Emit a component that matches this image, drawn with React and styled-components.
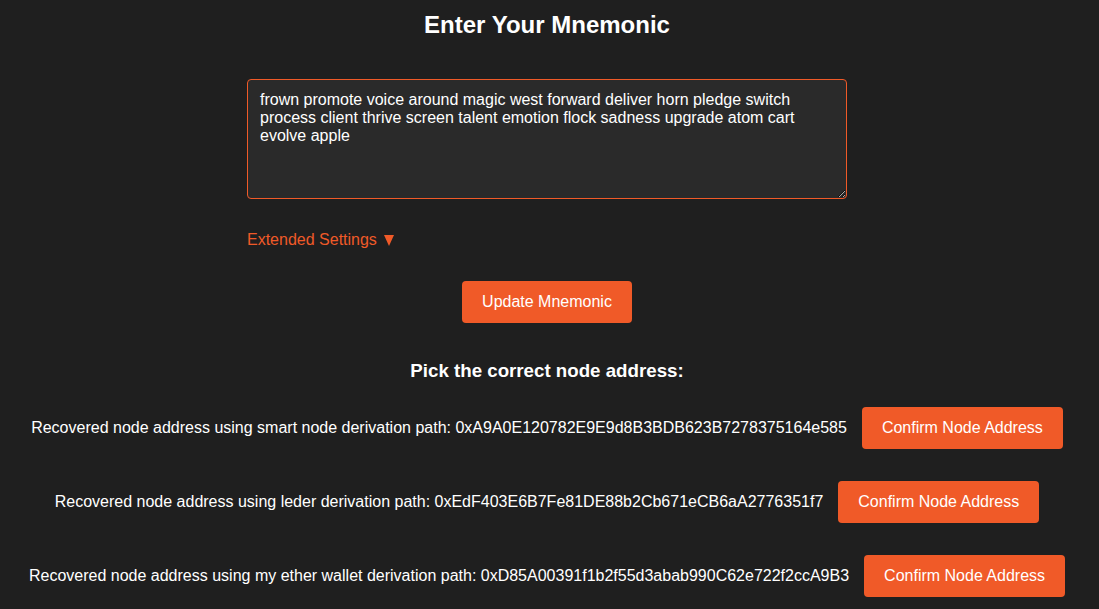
import React from 'react';
import styled, { createGlobalStyle } from 'styled-components';

const GlobalStyle = createGlobalStyle`
    html, body {
        margin: 0;
        padding: 0;
        background: #1f1f1f;
    }
    body {
        font-family: "Liberation Sans", Arial, sans-serif;
        color: #ffffff;
    }
`

const accent = '#f05a28';

const Page = styled.div`
    display: flex;
    flex-direction: column;
    align-items: center;
    min-height: 609px;
    padding: 11px 5px 0 0;
    box-sizing: border-box;
`

const Title = styled.h2`
    margin: 0;
    font-size: 24px;
    line-height: 28px;
    font-weight: bold;
`

const MnemonicBox = styled.textarea`
    margin-top: 40px;
    width: 600px;
    height: 120px;
    box-sizing: border-box;
    padding: 11px 12px;
    background: #2a2a2a;
    color: #ffffff;
    border: 1px solid ${accent};
    border-radius: 4px;
    font-family: "Liberation Sans", Arial, sans-serif;
    font-size: 16px;
    line-height: 18px;
    resize: vertical;
    outline: none;
`

const SettingsToggle = styled.div`
    display: flex;
    align-items: center;
    margin-top: 32px;
    width: 600px;
    color: ${accent};
    font-size: 16px;
    line-height: 18px;
    cursor: pointer;
`

const Caret = styled.span`
    display: inline-block;
    margin-left: 7px;
    margin-top: 1px;
    width: 0;
    height: 0;
    border-left: 5.5px solid transparent;
    border-right: 5.5px solid transparent;
    border-top: 11px solid ${accent};
`

const Button = styled.button`
    background: ${accent};
    color: #ffffff;
    border: none;
    border-radius: 4px;
    height: 42px;
    padding: 0 20px;
    font-family: "Liberation Sans", Arial, sans-serif;
    font-size: 16px;
    cursor: pointer;
    margin-top: ${props => props.$top || 0}px;
    flex-shrink: 0;
`

const SubTitle = styled.h3`
    margin: 37px 0 0;
    font-size: 18.72px;
    line-height: 22px;
    font-weight: bold;
`

const AddressList = styled.div`
    display: flex;
    flex-direction: column;
    align-items: center;
    gap: 32px;
    margin-top: 25px;
`

const AddressRow = styled.div`
    display: flex;
    align-items: center;
    justify-content: center;
    gap: 15px;
`

const AddressText = styled.span`
    font-size: 16px;
    line-height: 18px;
    white-space: nowrap;
`

const mnemonic = 'frown promote voice around magic west forward deliver horn pledge switch process client thrive screen talent emotion flock sadness upgrade atom cart evolve apple';

const addresses = [
    { path: 'smart node', address: '0xA9A0E120782E9E9d8B3BDB623B7278375164e585' },
    { path: 'leder', address: '0xEdF403E6B7Fe81DE88b2Cb671eCB6aA2776351f7' },
    { path: 'my ether wallet', address: '0xD85A00391f1b2f55d3abab990C62e722f2ccA9B3' },
];

export default function App() {
    return (
        <Page>
            <GlobalStyle />
            <Title>Enter Your Mnemonic</Title>
            <MnemonicBox defaultValue={mnemonic} spellCheck={false} />
            <SettingsToggle>
                Extended Settings
                <Caret />
            </SettingsToggle>
            <Button $top={32}>Update Mnemonic</Button>
            <SubTitle>Pick the correct node address:</SubTitle>
            <AddressList>
                {addresses.map(item => (
                    <AddressRow key={item.address}>
                        <AddressText>
                            Recovered node address using {item.path} derivation path: {item.address}
                        </AddressText>
                        <Button>Confirm Node Address</Button>
                    </AddressRow>
                ))}
            </AddressList>
        </Page>
    );
}
